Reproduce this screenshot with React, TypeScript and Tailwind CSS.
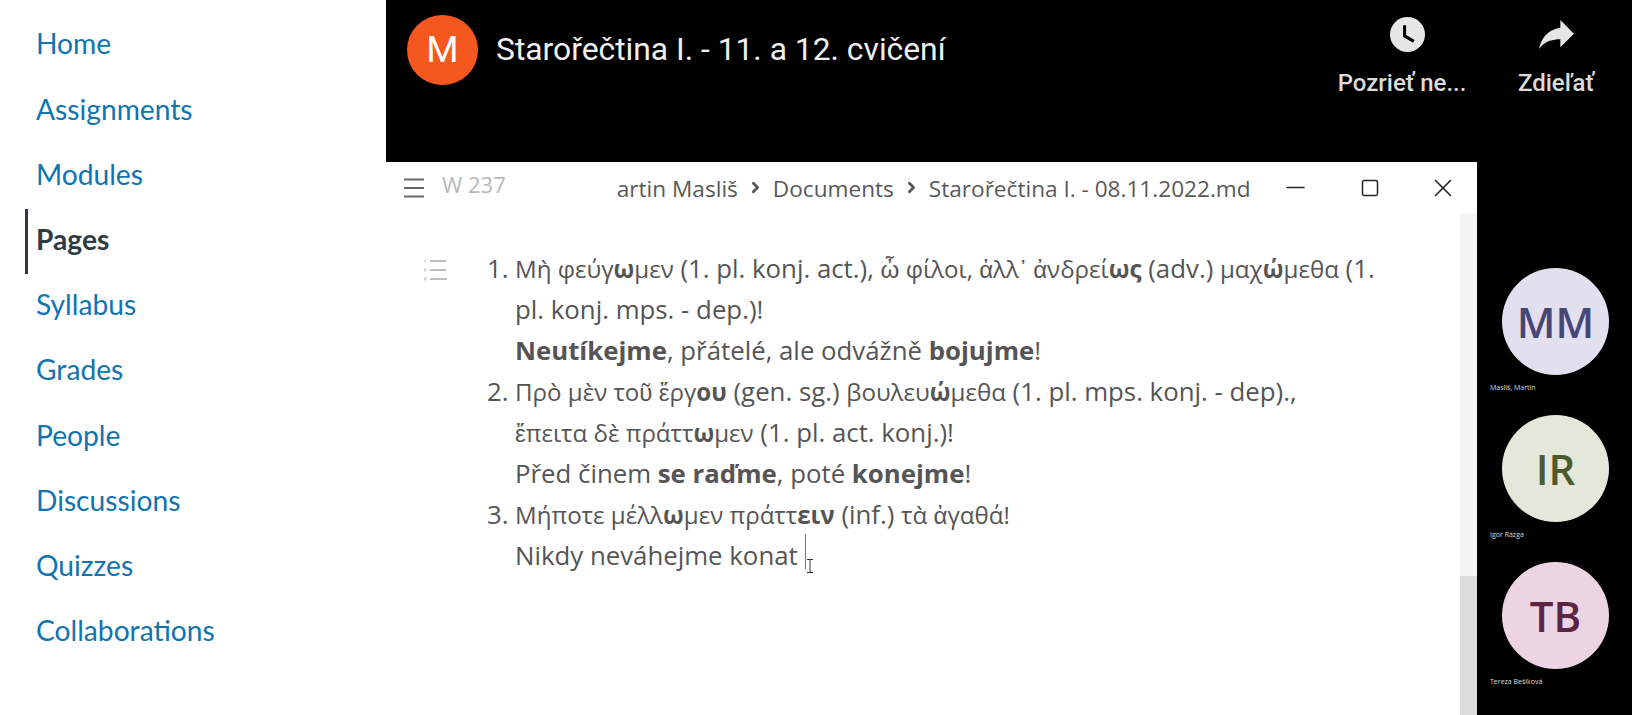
import type { ReactNode } from "react";
import { ChevronRight, Minus, Square, X } from "lucide-react";

const navItems = ["Home", "Assignments", "Modules", "Pages", "Syllabus", "Grades", "People", "Discussions", "Quizzes", "Collaborations"];

const people = [
  { initials: "MM", name: "Masliš, Martin", bg: "bg-[#e2e0ef]", text: "text-[#464775]" },
  { initials: "IR", name: "Igor Rázga", bg: "bg-[#e3e8da]", text: "text-[#4b5a2f]" },
  { initials: "TB", name: "Tereza Bešíková", bg: "bg-[#edd4e2]", text: "text-[#5c2342]" },
];

// Greek falls back to a narrower face in the original, so it runs a bit smaller than the Latin text
const Gr = ({ children }: { children: ReactNode }) => <span className="text-[24.1px]">{children}</span>;

const Sidebar = () => (
  <nav className="w-[386px] shrink-0 pt-[13px] font-['Lato',sans-serif] text-[28.2px]">
    {navItems.map((item) => (
      <div
        key={item}
        className={`ml-[25px] flex h-[65.2px] items-center border-l-[3px] pb-[4px] pl-[8px] ${
          item === "Pages" ? "border-[#2d3b45] font-bold text-[#2d3b45]" : "border-transparent text-[#0f74b0]"
        }`}
      >
        {item}
      </div>
    ))}
  </nav>
);

const TopBar = () => (
  <header className="flex h-[162px] shrink-0 items-start bg-black font-['Roboto',sans-serif]">
    <div className="ml-[21px] mt-[15px] flex h-[70px] w-[71px] items-center justify-center rounded-full bg-[#f4581f] text-[37px] text-white">
      M
    </div>
    <h1 className="ml-[18px] mt-[28px] text-[31.8px] leading-[42px] text-[#f0f0f0]">Starořečtina I. - 11. a 12. cvičení</h1>
    <div className="ml-auto mt-[17px] flex w-[128px] flex-col items-center text-[24px] font-medium text-[#dcdcdc]">
      <svg viewBox="0 0 36 36" className="ml-[11px] h-[35px] w-[35px]">
        <circle cx="18" cy="18" r="18" fill="#e6e6e6" />
        <path d="M15 8.5V19.5L24.5 25" fill="none" stroke="#000" strokeWidth="3.2" />
      </svg>
      <span className="mt-[16px] leading-[30px] whitespace-nowrap">Pozrieť ne...</span>
    </div>
    <div className="ml-[51px] mr-[37px] mt-[17px] flex w-[78px] flex-col items-center text-[24px] font-medium text-[#dcdcdc]">
      <svg viewBox="0 0 36 36" className="mt-[-14px] h-[63px] w-[63px] shrink-0">
        <path
          fill="#e6e6e6"
          d="m20.2 14.19 0-4.45 7.79 7.79-7.79 7.79 0-4.56C16.27 20.69 12.1 21.81 9.34 24.76 8.8 25.13 7.6 27.29 8.12 25.65 9.08 21.32 11.8 17.18 15.98 15.38c1.33-.6 2.76-.98 4.21-1.19z"
        />
      </svg>
      <span className="mt-[2px] leading-[30px] whitespace-nowrap">Zdieľať</span>
    </div>
  </header>
);

const TitleBar = () => (
  <div className="flex h-[51px] shrink-0 items-center text-[22.6px] text-[#595959]">
    <svg viewBox="0 0 20 20" className="ml-[18px] h-[20px] w-[20px] shrink-0">
      <path d="M0 1.5H20M0 10H20M0 18.5H20" stroke="#666" strokeWidth="2" />
    </svg>
    <span className="ml-[18px] mt-[-6px] text-[22px] text-[#b8b8b8]">W 237</span>
    <span className="ml-[111px] mt-[2px]">artin Masliš</span>
    <ChevronRight className="mx-[9px] h-[17px] w-[17px]" strokeWidth={4} />
    <span className="mt-[2px]">Documents</span>
    <ChevronRight className="mx-[9px] h-[17px] w-[17px]" strokeWidth={4} />
    <span className="mt-[2px]">Starořečtina I. - 08.11.2022.md</span>
    <Minus className="ml-[30px] h-[29px] w-[29px] text-[#222]" strokeWidth={1.3} />
    <Square className="ml-[50px] h-[20px] w-[20px] text-[#222]" strokeWidth={1.8} />
    <X className="ml-[48px] h-[30px] w-[30px] text-[#222]" strokeWidth={1.3} />
  </div>
);

const ListIcon = () => (
  <svg viewBox="0 0 24 22" className="ml-[37px] mt-[11px] h-[22px] w-[24px] shrink-0">
    <path d="M7 2H23M7 11H23M7 20H24" stroke="#bdbdbd" strokeWidth="1.8" />
    <path d="M1.5 2H3M1 11H3.5M1 20H3.5" stroke="#d0d0d0" strokeWidth="3" />
  </svg>
);

const Document = () => (
  <div className="flex min-h-0 flex-1 overflow-hidden pt-[35px]">
    <ListIcon />
    <ol className="ml-[40px] w-[900px] font-['Open_Sans',sans-serif] text-[25.8px] leading-[41px] text-[#555]">
      <li className="flex">
        <span className="w-[28px] shrink-0">1.</span>
        <div className="whitespace-nowrap">
          <Gr>
            Μὴ φεύγ<b>ω</b>μεν
          </Gr>{" "}
          (1. pl. konj. act.),{" "}
          <Gr>
            ὦ φίλοι, ἀλλ᾿ ἀνδρεί<b>ως</b>
          </Gr>{" "}
          (adv.){" "}
          <Gr>
            μαχ<b>ώ</b>μεθα
          </Gr>{" "}
          (1.
          <br />
          pl. konj. mps. - dep.)!
          <br />
          <b>Neutíkejme</b>, přátelé, ale odvážně <b>bojujme</b>!
        </div>
      </li>
      <li className="flex">
        <span className="w-[28px] shrink-0">2.</span>
        <div className="whitespace-nowrap">
          <Gr>
            Πρὸ μὲν τοῦ ἔργ<b>ου</b>
          </Gr>{" "}
          (gen. sg.){" "}
          <Gr>
            βουλευ<b>ώ</b>μεθα
          </Gr>{" "}
          (1. pl. mps. konj. - dep).,
          <br />
          <Gr>
            ἔπειτα δὲ πράττ<b>ω</b>μεν
          </Gr>{" "}
          (1. pl. act. konj.)!
          <br />
          Před činem <b>se raďme</b>, poté <b>konejme</b>!
        </div>
      </li>
      <li className="flex">
        <span className="w-[28px] shrink-0">3.</span>
        <div className="whitespace-nowrap">
          <Gr>
            Μήποτε μέλλ<b>ω</b>μεν πράττ<b>ειν</b>
          </Gr>{" "}
          (inf.){" "}
          <Gr>τὰ ἀγαθά!</Gr>
          <br />
          <span className="relative">
            Nikdy neváhejme konat
            <span className="absolute left-[calc(100%+7px)] top-[-3px] h-[35px] w-px bg-[#777]" />
            <svg viewBox="0 0 8 14" className="absolute left-[calc(100%+8px)] top-[22px] h-[14px] w-[8px]">
              <path d="M1 .5H7M4 .5V13.5M1 13.5H7" fill="none" stroke="#333" strokeWidth="1" />
            </svg>
          </span>
        </div>
      </li>
    </ol>
  </div>
);

const Scrollbar = () => (
  <div className="mt-[51px] flex w-[17px] shrink-0 flex-col bg-[#f5f5f5]">
    <div className="mt-[363px] flex-1 bg-[#dcdcdc]" />
  </div>
);

const PeopleRail = () => (
  <aside className="flex flex-1 flex-col bg-black pt-[106px]">
    {people.map((person) => (
      <div key={person.name} className="mb-[28px] flex h-[119px] flex-col">
        <div
          className={`ml-[25px] flex h-[107px] w-[107px] shrink-0 items-center justify-center rounded-full font-['Open_Sans',sans-serif] text-[42px] font-semibold ${person.bg} ${person.text}`}
        >
          {person.initials}
        </div>
        <span className="ml-[13px] mt-[8px] font-['Open_Sans',sans-serif] text-[7px] leading-[10px] whitespace-nowrap text-[#ddd]">
          {person.name}
        </span>
      </div>
    ))}
  </aside>
);

export default function App() {
  return (
    <div className="flex h-[715px] w-[1632px] overflow-hidden bg-white">
      <Sidebar />
      <main className="flex min-w-0 flex-1 flex-col">
        <TopBar />
        <div className="flex min-h-0 flex-1">
          <section className="relative flex w-[1091px] shrink-0 bg-white">
            <div className="flex min-w-0 flex-1 flex-col font-['Open_Sans',sans-serif]">
              <TitleBar />
              <Document />
            </div>
            <div className="absolute right-0 top-0 flex h-full">
              <Scrollbar />
            </div>
          </section>
          <PeopleRail />
        </div>
      </main>
    </div>
  );
}
